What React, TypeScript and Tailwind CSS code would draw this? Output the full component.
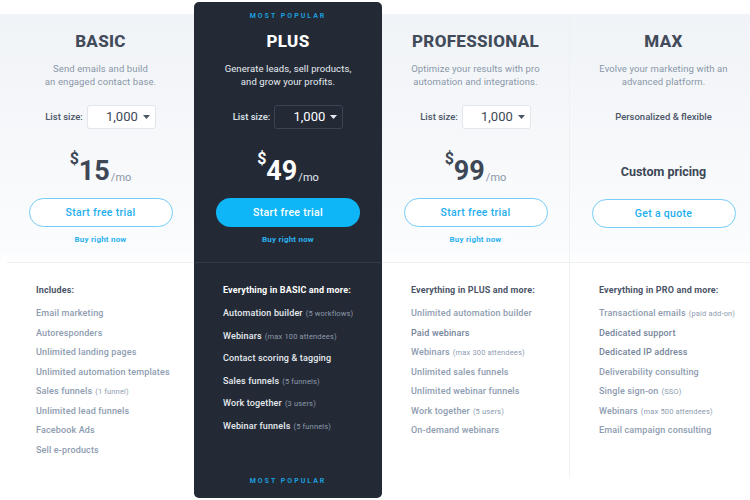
import React from "react";

type Feature = { label: string; note?: string; strong?: boolean };

type Plan = {
  name: string;
  desc: string[];
  price?: string;
  featured?: boolean;
  heading: string;
  features: Feature[];
};

const plans: Plan[] = [
  {
    name: "BASIC",
    desc: ["Send emails and build", "an engaged contact base."],
    price: "15",
    heading: "Includes:",
    features: [
      { label: "Email marketing" },
      { label: "Autoresponders" },
      { label: "Unlimited landing pages" },
      { label: "Unlimited automation templates" },
      { label: "Sales funnels", note: "(1 funnel)" },
      { label: "Unlimited lead funnels" },
      { label: "Facebook Ads" },
      { label: "Sell e-products" },
    ],
  },
  {
    name: "PLUS",
    desc: ["Generate leads, sell products,", "and grow your profits."],
    price: "49",
    featured: true,
    heading: "Everything in BASIC and more:",
    features: [
      { label: "Automation builder", note: "(5 workflows)" },
      { label: "Webinars", note: "(max 100 attendees)" },
      { label: "Contact scoring & tagging" },
      { label: "Sales funnels", note: "(5 funnels)" },
      { label: "Work together", note: "(3 users)" },
      { label: "Webinar funnels", note: "(5 funnels)" },
    ],
  },
  {
    name: "PROFESSIONAL",
    desc: ["Optimize your results with pro", "automation and integrations."],
    price: "99",
    heading: "Everything in PLUS and more:",
    features: [
      { label: "Unlimited automation builder" },
      { label: "Paid webinars", strong: true },
      { label: "Webinars", note: "(max 300 attendees)" },
      { label: "Unlimited sales funnels" },
      { label: "Unlimited webinar funnels" },
      { label: "Work together", note: "(5 users)" },
      { label: "On-demand webinars" },
    ],
  },
  {
    name: "MAX",
    desc: ["Evolve your marketing with an", "advanced platform."],
    heading: "Everything in PRO and more:",
    features: [
      { label: "Transactional emails", note: "(paid add-on)" },
      { label: "Dedicated support", strong: true },
      { label: "Dedicated IP address", strong: true },
      { label: "Deliverability consulting" },
      { label: "Single sign-on", note: "(SSO)" },
      { label: "Webinars", note: "(max 500 attendees)" },
      { label: "Email campaign consulting" },
    ],
  },
];

const Caret = ({ light }: { light?: boolean }) => (
  <svg width="7" height="4" viewBox="0 0 7 4" className="ml-[5px]">
    <path d="M0 0h7L3.5 4z" fill={light ? "#e5e9ef" : "#4a5566"} />
  </svg>
);

const ListSize = ({ dark }: { dark?: boolean }) => (
  <div className="flex items-center h-[24px]">
    <span className={`text-[9.5px] font-medium mr-[4px] ${dark ? "text-[#dfe4ea]" : "text-[#4b5567]"}`}>
      List size:
    </span>
    <div
      className={`w-[69px] h-[24px] rounded-[3px] border flex items-center justify-end pr-[5px] ${
        dark ? "border-[#3b4453] bg-[#232a36]" : "border-[#e1e6ec] bg-white"
      }`}
    >
      <span className={`text-[13px] ${dark ? "text-white" : "text-[#3d4756]"}`}>1,000</span>
      <Caret light={dark} />
    </div>
  </div>
);

const PlanTop = ({ plan }: { plan: Plan }) => {
  const dark = plan.featured;
  return (
    <div className="flex flex-col items-center">
      <div
        className={`mt-[15px] text-[17px] leading-[24px] font-extrabold tracking-[0.3px] ${
          dark ? "text-white" : "text-[#414b5a]"
        }`}
      >
        {plan.name}
      </div>
      <div
        className={`mt-[9px] text-[9.5px] leading-[13px] text-center tracking-[0.1px] ${
          dark ? "text-[#e8ecf1]" : "text-[#8a97a8]"
        }`}
      >
        {plan.desc.map((d) => (
          <div key={d}>{d}</div>
        ))}
      </div>
      {plan.price ? (
        <>
          <div className="mt-[17px]">
            <ListSize dark={dark} />
          </div>
          <div className={`mt-[22px] h-[34px] flex items-end ${dark ? "text-white" : "text-[#3d4756]"}`}>
            <span className="text-[16px] font-bold self-start leading-[16px]">$</span>
            <span className="text-[27px] font-bold leading-[27px]">{plan.price}</span>
            <span className={`text-[11px] leading-[14px] ml-[1px] ${dark ? "text-[#e5e9ef]" : "text-[#8a97a8]"}`}>/mo</span>
          </div>
          <button
            className={`mt-[13px] w-[144px] h-[29px] rounded-full text-[10.5px] font-medium tracking-[0.3px] ${
              dark
                ? "bg-[#0fb6f7] text-white"
                : "bg-white border border-[#74cdf7] text-[#22aeee]"
            }`}
          >
            Start free trial
          </button>
          <div className="mt-[7px] text-[8px] leading-[12px] font-bold tracking-[0.2px] text-[#2bb1ef]">
            Buy right now
          </div>
        </>
      ) : (
        <>
          <div className="mt-[17px] h-[24px] flex items-center text-[9.5px] font-medium text-[#4b5567]">
            Personalized &amp; flexible
          </div>
          <div className="mt-[35px] text-[12.5px] leading-[16px] font-bold text-[#3d4756]">Custom pricing</div>
          <button className="mt-[19px] w-[144px] h-[29px] rounded-full text-[10.5px] font-medium tracking-[0.3px] bg-white border border-[#74cdf7] text-[#22aeee]">
            Get a quote
          </button>
        </>
      )}
    </div>
  );
};

const FeatureList = ({ plan }: { plan: Plan }) => {
  const dark = plan.featured;
  return (
    <div className="pl-[29px] pt-[20px]">
      <div
        className={`text-[9px] leading-[14px] font-bold tracking-[0.15px] ${
          dark ? "text-white" : "text-[#4b5567]"
        }`}
      >
        {plan.heading}
      </div>
      <ul className={dark ? "mt-[5px]" : "mt-[7px]"}>
        {plan.features.map((f) => (
          <li
            key={f.label + (f.note ?? "")}
            className={`text-[9px] font-medium tracking-[0.15px] whitespace-nowrap ${
              dark
                ? "h-[22.6px] leading-[22.6px] text-[#e6eaef]"
                : f.strong
                ? "h-[19.5px] leading-[19.5px] text-[#75849a]"
                : "h-[19.5px] leading-[19.5px] text-[#8e9cb0]"
            }`}
          >
            {f.label}
            {f.note && (
              <span
                className={`ml-[3px] text-[7.5px] leading-none font-normal ${
                  dark ? "text-[#8e99aa]" : "text-[#8e9cb0]"
                }`}
              >
                {f.note}
              </span>
            )}
          </li>
        ))}
      </ul>
    </div>
  );
};

export default function App() {
  return (
    <div
      className="w-[750px] h-[500px] overflow-hidden bg-white"
      style={{ fontFamily: "Roboto, 'Liberation Sans', sans-serif" }}
    >
      <div className="flex pl-[7px] pt-[14px] h-[500px] bg-[linear-gradient(to_bottom,#ffffff_14px,#f0f3f7_14px,#fbfcfd_250px,#ffffff_263px)]">
        {plans.map((plan, i) =>
          plan.featured ? (
            <div
              key={plan.name}
              className="w-[188px] shrink-0 -mt-[12px] h-[496px] rounded-[5px] bg-[#232a36] flex flex-col"
            >
              <div className="h-[261px] border-b border-[#333b49]">
                <div className="pt-[9px] text-center text-[7px] leading-[10px] font-bold tracking-[2px] text-[#1a9ede]">
                  MOST POPULAR
                </div>
                <div className="-mt-[7px]">
                  <PlanTop plan={plan} />
                </div>
              </div>
              <FeatureList plan={plan} />
              <div className="mt-auto pb-[12px] text-center text-[7px] leading-[10px] font-bold tracking-[2px] text-[#1a9ede]">
                MOST POPULAR
              </div>
            </div>
          ) : (
            <div
              key={plan.name}
              className={`shrink-0 flex flex-col ${
                i === 3 ? "w-[188px] h-[463px] border-l border-[#eef1f4]" : "w-[187px]"
              }`}
            >
              <div className="h-[249px] border-b border-[#edf0f3]">
                <PlanTop plan={plan} />
              </div>
              <FeatureList plan={plan} />
            </div>
          )
        )}
      </div>
    </div>
  );
}
